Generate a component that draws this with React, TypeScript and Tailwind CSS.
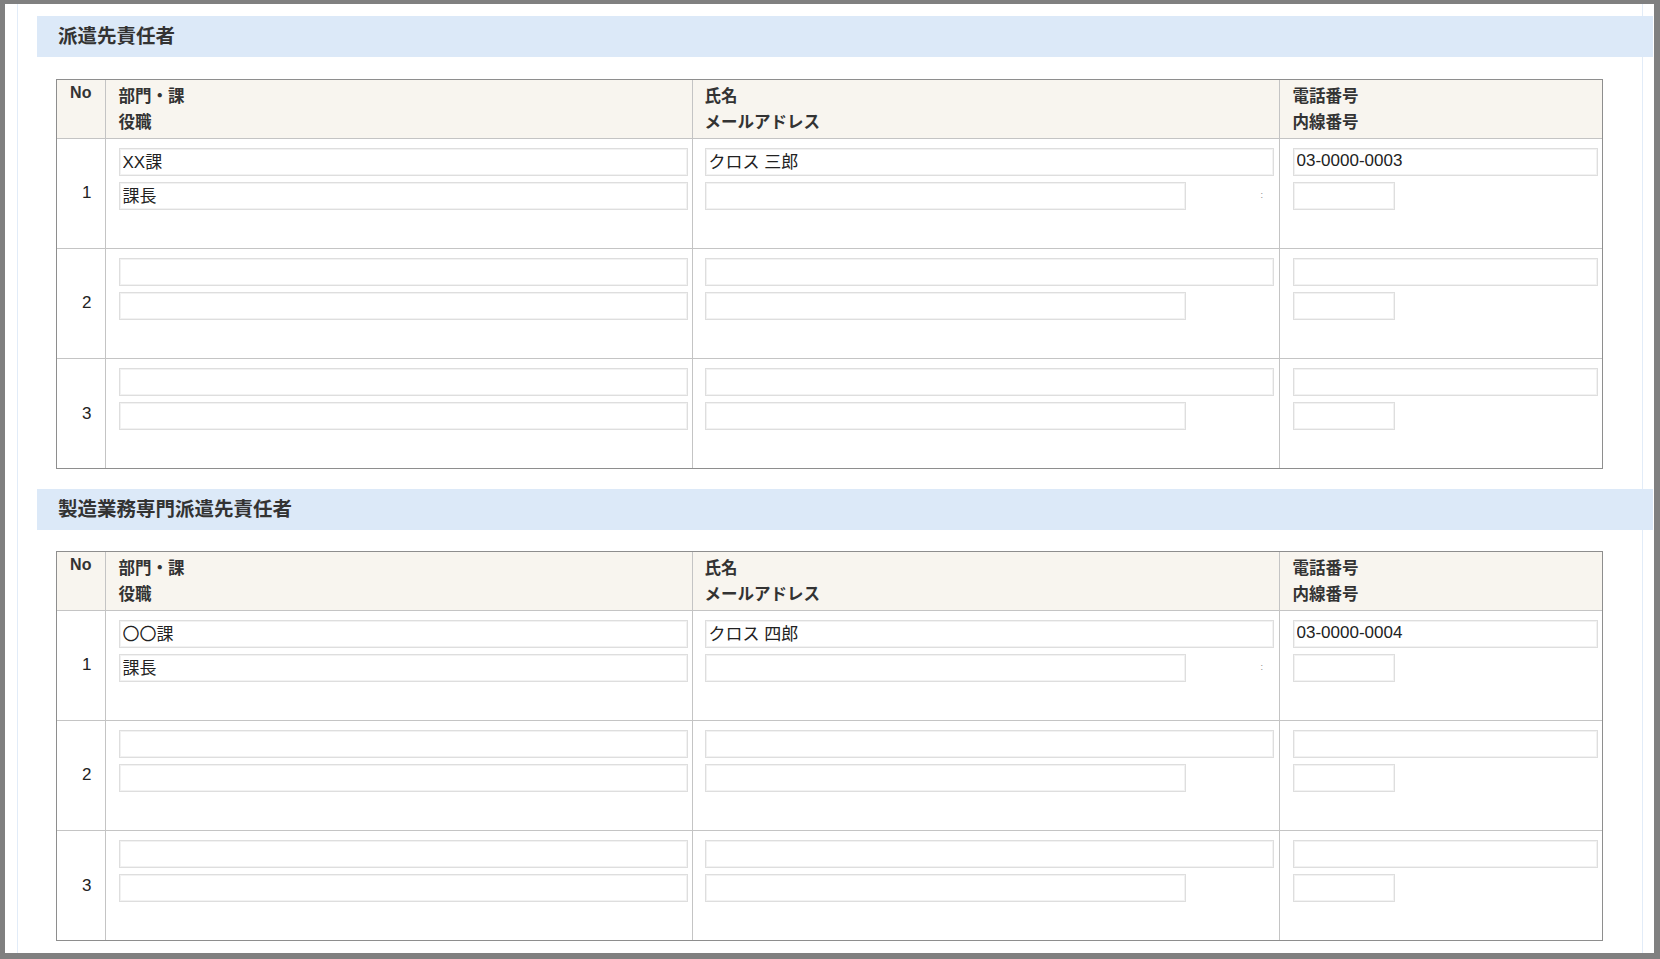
import React from "react";

type Row = {
  busho: string;
  yakushoku: string;
  shimei: string;
  mail: string;
  tel: string;
  naisen: string;
};

const font = { fontFamily: '"Liberation Sans", "Noto Sans CJK JP", sans-serif' };

const haken: Row[] = [
  { busho: "XX課", yakushoku: "課長", shimei: "クロス 三郎", mail: "", tel: "03-0000-0003", naisen: "" },
  { busho: "", yakushoku: "", shimei: "", mail: "", tel: "", naisen: "" },
  { busho: "", yakushoku: "", shimei: "", mail: "", tel: "", naisen: "" },
];

const seizou: Row[] = [
  { busho: "〇〇課", yakushoku: "課長", shimei: "クロス 四郎", mail: "", tel: "03-0000-0004", naisen: "" },
  { busho: "", yakushoku: "", shimei: "", mail: "", tel: "", naisen: "" },
  { busho: "", yakushoku: "", shimei: "", mail: "", tel: "", naisen: "" },
];

function Field({ value, className }: { value: string; className: string }) {
  return (
    <input
      type="text"
      defaultValue={value}
      style={font}
      className={`block h-[28px] border border-[#dedede] shadow-[inset_0_0_0_1px_#f2f2f2] bg-white px-[3px] pb-[2px] text-[17px] text-[#222] outline-none ${className}`}
    />
  );
}

function Section({ title, rows, top }: { title: string; rows: Row[]; top: string }) {
  return (
    <>
      <div className="ml-[19px] -mr-[11px] h-[41px] bg-[#dce9f8] flex items-center pl-[21px]">
        <h2 className="text-[19.5px] font-bold text-[#333] leading-none">{title}</h2>
      </div>
      <div className={`ml-[38px] w-[1547px] border border-[#8e8e8e] ${top}`}>
        <table className="w-full table-fixed border-collapse text-[#333]">
          <colgroup>
            <col className="w-[48px]" />
            <col className="w-[587px]" />
            <col className="w-[587px]" />
            <col />
          </colgroup>
          <thead>
            <tr className="h-[58px] bg-[#f8f5ef]">
              <th className="align-top pt-[3px] text-[16px] leading-[20px] font-bold text-center">
                No
              </th>
              <th className="border-l border-[#c4c4c4] align-top pt-[3px] pl-[13px] text-left text-[16.5px] leading-[26px] font-bold">
                部門・課
                <br />
                役職
              </th>
              <th className="border-l border-[#c4c4c4] align-top pt-[3px] pl-[12px] text-left text-[16.5px] leading-[26px] font-bold">
                氏名
                <br />
                メールアドレス
              </th>
              <th className="border-l border-[#c4c4c4] align-top pt-[3px] pl-[13px] text-left text-[16.5px] leading-[26px] font-bold">
                電話番号
                <br />
                内線番号
              </th>
            </tr>
          </thead>
          <tbody>
            {rows.map((r, i) => (
              <tr key={i} className="h-[110px]">
                <td className="border-t border-[#c4c4c4] align-middle text-right pr-[13px] text-[17px] text-[#222]">
                  {i + 1}
                </td>
                <td className="border-t border-l border-[#c4c4c4] align-top pt-[9px] pl-[13px] pr-[4px]">
                  <Field value={r.busho} className="w-full" />
                  <Field value={r.yakushoku} className="w-full mt-[6px]" />
                </td>
                <td className="border-t border-l border-[#c4c4c4] align-top pt-[9px] pl-[12px] pr-[5px]">
                  <Field value={r.shimei} className="w-full" />
                  <div className="flex items-center mt-[6px]">
                    <Field value={r.mail} className="w-[481px]" />
                    {i === 0 && (
                      <span className="ml-[75px] text-[9px] leading-none text-[#8a8a8a]">:</span>
                    )}
                  </div>
                </td>
                <td className="border-t border-l border-[#c4c4c4] align-top pt-[9px] pl-[13px] pr-[4px]">
                  <Field value={r.tel} className="w-full" />
                  <Field value={r.naisen} className="w-[102px] mt-[6px]" />
                </td>
              </tr>
            ))}
          </tbody>
        </table>
      </div>
    </>
  );
}

export default function App() {
  return (
    <div
      style={font}
      className="w-[1660px] h-[959px] overflow-hidden bg-white border-t-[4px] border-l-[5px] border-r-[6px] border-b-[6px] border-[#808080]"
    >
      <div className="ml-[12px] w-[1626px] h-full border-x border-[#e2ecf8] pt-[12px]">
        <Section title="派遣先責任者" rows={haken} top="mt-[22px]" />
        <div className="h-[20px]" />
        <Section title="製造業務専門派遣先責任者" rows={seizou} top="mt-[21px]" />
      </div>
    </div>
  );
}
